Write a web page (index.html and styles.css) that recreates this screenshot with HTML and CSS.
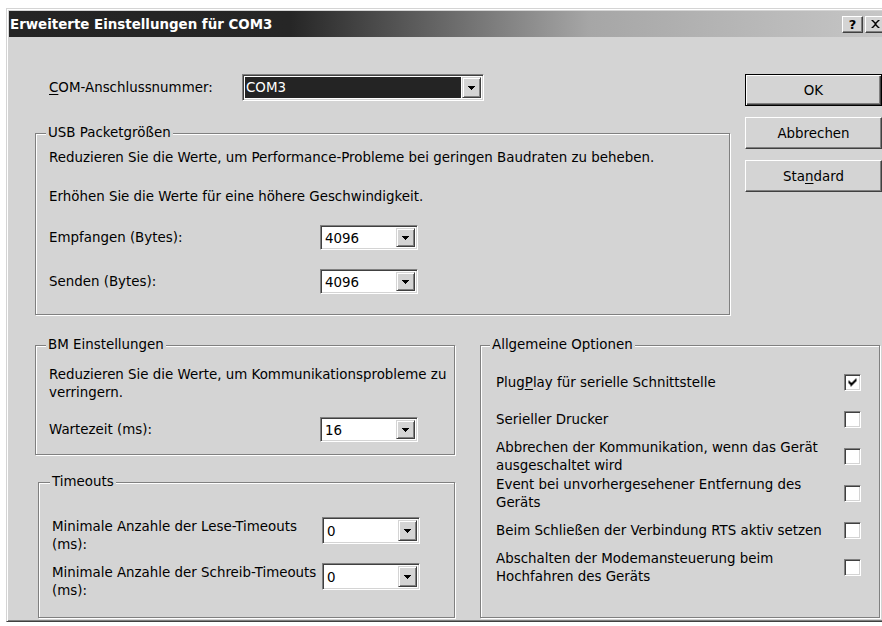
FILE: index.html
```html
<!DOCTYPE html>
<html lang="de">
<head>
<meta charset="utf-8">
<title>Erweiterte Einstellungen für COM3</title>
<link rel="stylesheet" href="styles.css">
</head>
<body>
<div class="window">
  <div class="titlebar">
    <span class="title">Erweiterte Einstellungen für COM3</span>
    <div class="caption-buttons">
      <span class="cbtn help">?</span>
      <span class="cbtn close">
        <svg width="9" height="8" viewBox="0 0 9 8"><path d="M0 0h2l2.5 2.5L7 0h2L5.5 3.5v1L9 8H7L4.5 5.5 2 8H0l3.5-3.5v-1z"/></svg>
      </span>
    </div>
  </div>

  <div class="client">
    <div class="top">
      <div class="main-col">
        <div class="port-row">
          <span class="port-label"><u>C</u>OM-Anschlussnummer:</span>
          <div class="combo combo-port">
            <span class="combo-value selected">COM3</span>
            <span class="combo-btn"><svg width="7" height="4" viewBox="0 0 7 4"><path d="M0 0h7v1H0zM1 1h5v1H1zM2 2h3v1H2zM3 3h1v1H3z"/></svg></span>
          </div>
        </div>

        <div class="group group-usb">
          <span class="legend">USB Packetgrößen</span>
          <p class="note">Reduzieren Sie die Werte, um Performance-Probleme bei geringen Baudraten zu beheben.</p>
          <p class="note note-gap">Erhöhen Sie die Werte für eine höhere Geschwindigkeit.</p>
          <div class="field-row">
            <span class="field-label">Empfangen (Bytes):</span>
            <div class="combo">
              <span class="combo-value">4096</span>
              <span class="combo-btn"><svg width="7" height="4" viewBox="0 0 7 4"><path d="M0 0h7v1H0zM1 1h5v1H1zM2 2h3v1H2zM3 3h1v1H3z"/></svg></span>
            </div>
          </div>
          <div class="field-row">
            <span class="field-label">Senden (Bytes):</span>
            <div class="combo">
              <span class="combo-value">4096</span>
              <span class="combo-btn"><svg width="7" height="4" viewBox="0 0 7 4"><path d="M0 0h7v1H0zM1 1h5v1H1zM2 2h3v1H2zM3 3h1v1H3z"/></svg></span>
            </div>
          </div>
        </div>
      </div>

      <div class="buttons">
        <button class="btn default">OK</button>
        <button class="btn">Abbrechen</button>
        <button class="btn">Sta<u>n</u>dard</button>
      </div>
    </div>

    <div class="bottom">
      <div class="left-col">
        <div class="group group-bm">
          <span class="legend">BM Einstellungen</span>
          <p class="note">Reduzieren Sie die Werte, um Kommunikationsprobleme zu<br>verringern.</p>
          <div class="field-row field-row-bm">
            <span class="field-label">Wartezeit (ms):</span>
            <div class="combo">
              <span class="combo-value">16</span>
              <span class="combo-btn"><svg width="7" height="4" viewBox="0 0 7 4"><path d="M0 0h7v1H0zM1 1h5v1H1zM2 2h3v1H2zM3 3h1v1H3z"/></svg></span>
            </div>
          </div>
        </div>

        <div class="group group-timeouts">
          <span class="legend">Timeouts</span>
          <div class="timeout-row">
            <span class="timeout-label">Minimale Anzahle der Lese-Timeouts<br>(ms):</span>
            <div class="combo combo-tall">
              <span class="combo-value">0</span>
              <span class="combo-btn"><svg width="7" height="4" viewBox="0 0 7 4"><path d="M0 0h7v1H0zM1 1h5v1H1zM2 2h3v1H2zM3 3h1v1H3z"/></svg></span>
            </div>
          </div>
          <div class="timeout-row timeout-row-next">
            <span class="timeout-label">Minimale Anzahle der Schreib-Timeouts<br>(ms):</span>
            <div class="combo combo-tall">
              <span class="combo-value">0</span>
              <span class="combo-btn"><svg width="7" height="4" viewBox="0 0 7 4"><path d="M0 0h7v1H0zM1 1h5v1H1zM2 2h3v1H2zM3 3h1v1H3z"/></svg></span>
            </div>
          </div>
        </div>
      </div>

      <div class="group group-options">
        <span class="legend">Allgemeine Optionen</span>
        <div class="option">
          <span>Plug<u>P</u>lay für serielle Schnittstelle</span>
          <span class="checkbox checked"><svg width="13" height="13" viewBox="0 0 13 13"><path d="M9 2h1v1H9zM8 3h2v1H8zM2 4h1v1H2zM7 4h3v1H7zM2 5h2v1H2zM6 5h3v1H6zM2 6h6v1H2zM3 7h4v1H3zM4 8h2v1H4zM4 9h1v1H4z" transform="translate(0.5 0.5)"/></svg></span>
        </div>
        <div class="option">
          <span>Serieller Drucker</span>
          <span class="checkbox"></span>
        </div>
        <div class="option">
          <span>Abbrechen der Kommunikation, wenn das Gerät<br>ausgeschaltet wird</span>
          <span class="checkbox"></span>
        </div>
        <div class="option">
          <span>Event bei unvorhergesehener Entfernung des<br>Geräts</span>
          <span class="checkbox"></span>
        </div>
        <div class="option">
          <span>Beim Schließen der Verbindung RTS aktiv setzen</span>
          <span class="checkbox"></span>
        </div>
        <div class="option">
          <span>Abschalten der Modemansteuerung beim<br>Hochfahren des Geräts</span>
          <span class="checkbox"></span>
        </div>
      </div>
    </div>
  </div>
</div>
</body>
</html>
```

FILE: styles.css
```css
* {
  box-sizing: border-box;
}

html,
body {
  margin: 0;
  height: 100%;
  overflow: hidden;
  background: #fff;
}

body {
  font-family: "DejaVu Sans", Verdana, sans-serif;
  font-size: 13.4px;
  color: #000;
}

p {
  margin: 0;
}

u {
  text-decoration: underline;
  text-underline-offset: 2px;
}

/* dialog frame */
.window {
  margin: 8px 0 0 6px;
  width: 885px;
  height: 614px;
  padding: 2px;
  background: #d4d4d4;
  border: 1px solid;
  border-color: #d4d4d4 #404040 #404040 #d4d4d4;
  box-shadow: inset 1px 1px 0 #fff, inset -1px -1px 0 #808080;
  display: flex;
  flex-direction: column;
}

.titlebar {
  height: 26px;
  flex: none;
  display: flex;
  align-items: center;
  padding: 0 2px 0 1px;
  background: linear-gradient(90deg, #242424 0%, #262626 32%, #a6a6a6 66%, #c6c6c6 100%);
}

.title {
  color: #fff;
  font-weight: bold;
  font-size: 13.4px;
}

.caption-buttons {
  margin-left: auto;
  display: flex;
  gap: 2px;
}

.cbtn {
  width: 21px;
  height: 17px;
  display: flex;
  align-items: center;
  justify-content: center;
  background: #d4d4d4;
  border: 1px solid;
  border-color: #fff #404040 #404040 #fff;
  box-shadow: inset -1px -1px 0 #808080;
  font-weight: bold;
  font-size: 13px;
  line-height: 1;
}

.close svg {
  display: block;
}

/* client area */
.client {
  flex: 1;
  padding: 37px 0 0 26px;
}

.top {
  display: flex;
  align-items: flex-start;
}

.main-col {
  width: 695px;
}

.port-row {
  height: 27px;
  display: flex;
  align-items: center;
}

.port-label {
  width: 207px;
  padding-left: 14px;
}

/* command buttons */
.buttons {
  margin-left: 15px;
  width: 137px;
  display: flex;
  flex-direction: column;
  gap: 11px;
}

.btn {
  height: 32px;
  font: inherit;
  color: #000;
  padding: 0;
  background: #d4d4d4;
  border: 1px solid;
  border-color: #fff #404040 #404040 #fff;
  box-shadow: inset -1px -1px 0 #808080;
}

.btn.default {
  border-color: #000;
  box-shadow: inset 1px 1px 0 #fff, inset -1px -1px 0 #404040, inset -2px -2px 0 #808080;
}

/* combo boxes */
.combo {
  width: 98px;
  height: 25px;
  display: flex;
  padding: 1px;
  background: #fff;
  border: 1px solid;
  border-color: #808080 #fff #fff #808080;
  box-shadow: inset 1px 1px 0 #404040, inset -1px -1px 0 #d4d4d4;
}

.combo-port {
  width: 242px;
  height: 27px;
}

.combo-tall {
  height: 27px;
}

.combo-value {
  flex: 1;
  display: flex;
  align-items: center;
  padding-left: 2px;
  margin: 1px 0 0 1px;
}

.combo-value.selected {
  margin: 1px;
  padding-left: 1px;
  background: #242424;
  color: #fff;
}

.combo-btn {
  width: 19px;
  flex: none;
  display: flex;
  align-items: center;
  justify-content: center;
  margin: 1px 1px 1px 0;
  background: #d4d4d4;
  border: 1px solid;
  border-color: #d4d4d4 #404040 #404040 #d4d4d4;
  box-shadow: inset 1px 1px 0 #fff, inset -1px -1px 0 #808080;
}

.combo-btn svg {
  display: block;
}

/* etched group boxes */
.group {
  position: relative;
  border: 1px solid #808080;
  box-shadow: inset 1px 1px 0 #fff, 1px 1px 0 #fff;
}

.legend {
  position: absolute;
  top: -9px;
  left: 10px;
  padding: 0 2px;
  line-height: 16px;
  background: #d4d4d4;
}

.note {
  line-height: 18px;
}

.group-usb {
  margin-top: 32px;
  height: 182px;
  padding: 15px 0 0 13px;
}

.note-gap {
  margin-top: 21px;
}

.field-row {
  margin-top: 19px;
  display: flex;
  align-items: center;
}

.field-label {
  width: 271px;
}

.bottom {
  margin-top: 30px;
  display: flex;
  align-items: flex-start;
}

.left-col {
  width: 420px;
}

.group-bm {
  height: 110px;
  padding: 20px 0 0 13px;
}

.field-row-bm {
  margin-top: 15px;
}

.group-timeouts {
  margin: 27px 0 0 3px;
  height: 136px;
  padding: 34px 0 0 13px;
}

.group-timeouts .legend {
  left: 11px;
}

.timeout-row {
  display: flex;
  align-items: flex-start;
}

.timeout-row-next {
  margin-top: 9px;
}

.timeout-label {
  width: 270px;
  padding-top: 1px;
  line-height: 18px;
}

.group-options {
  margin-left: 25px;
  width: 400px;
  height: 273px;
  padding: 18px 18px 0 15px;
}

.group-options .legend {
  left: 9px;
}

.option {
  height: 37px;
  display: flex;
  align-items: center;
  justify-content: space-between;
  line-height: 18px;
}

.checkbox {
  width: 17px;
  height: 17px;
  flex: none;
  padding: 1px;
  background: #fff;
  border: 1px solid;
  border-color: #808080 #fff #fff #808080;
  box-shadow: inset 1px 1px 0 #404040, inset -1px -1px 0 #d4d4d4;
}

.checkbox svg {
  display: block;
}
```
